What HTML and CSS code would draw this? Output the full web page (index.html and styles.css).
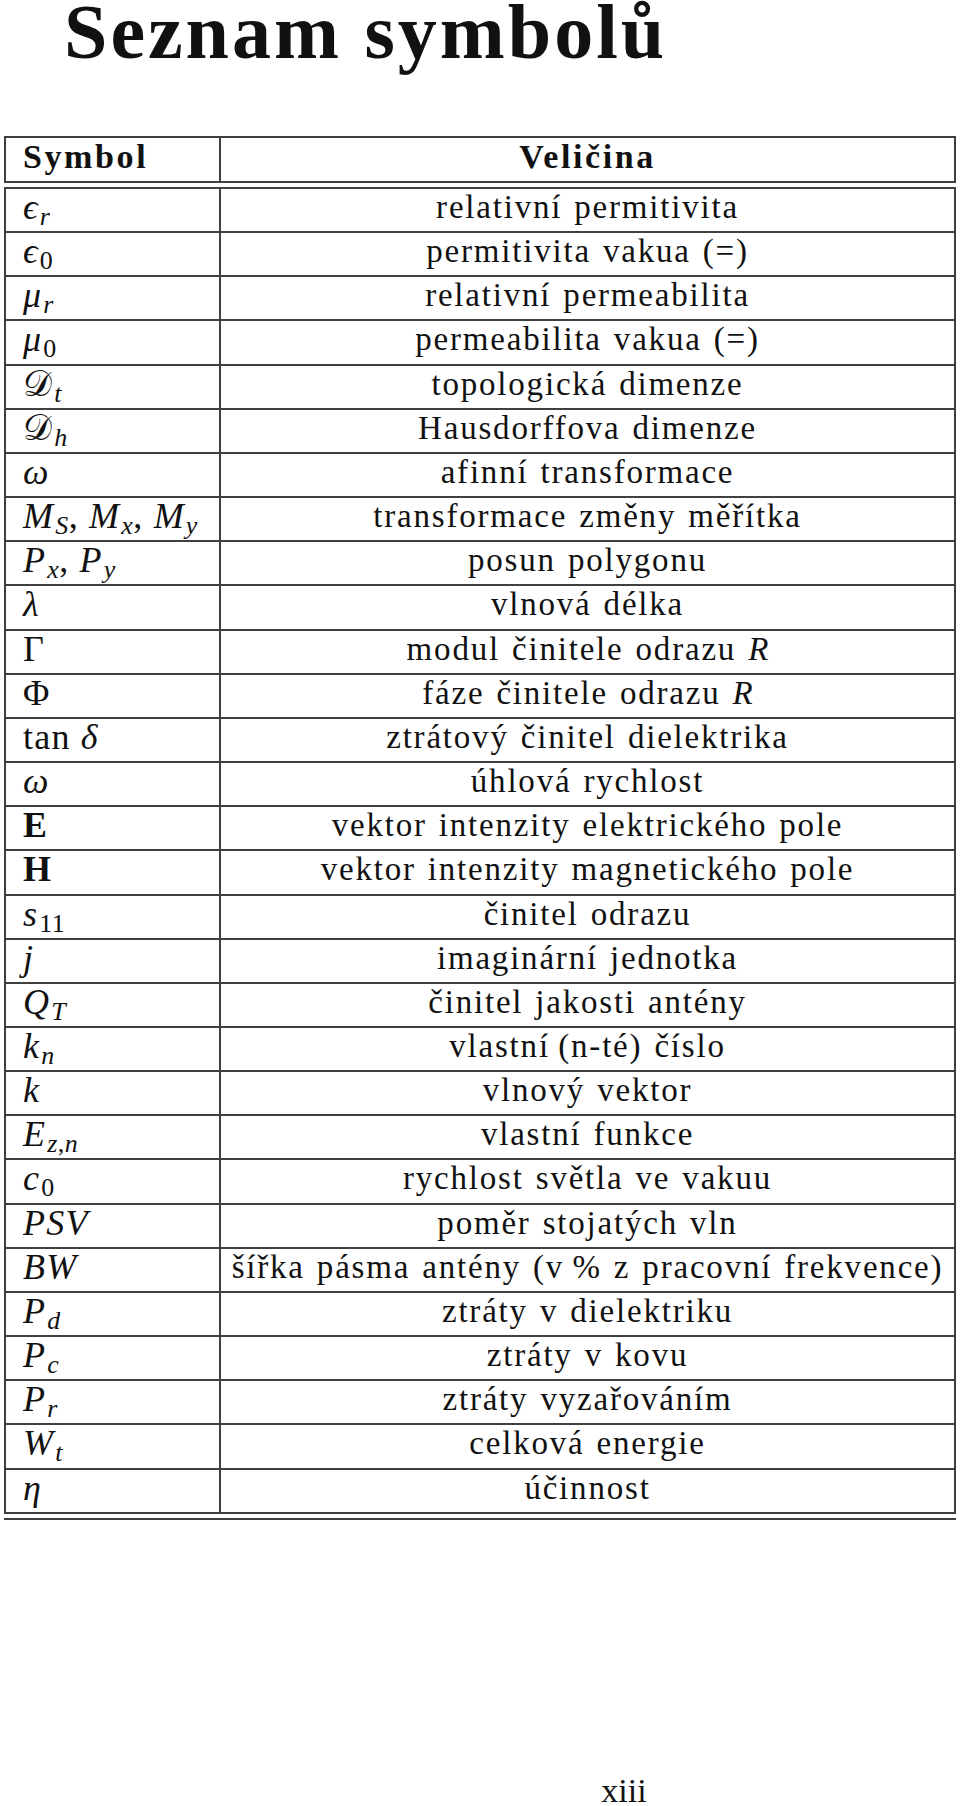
FILE: index.html
```html
<!DOCTYPE html>
<html lang="cs">
<head>
<meta charset="utf-8">
<title>Seznam symbolů</title>
<link rel="stylesheet" href="styles.css">
</head>
<body>
<main class="page">
  <h1 class="title">Seznam symbolů</h1>
  <section class="symtable">
    <div class="thead">
      <div class="row">
        <div class="c1 h">Symbol</div>
        <div class="c2 h">Veličina</div>
      </div>
    </div>
    <div class="tbody">
      <div class="row"><div class="c1 m">ϵ<sub>r</sub></div><div class="c2">relativní permitivita</div></div>
      <div class="row"><div class="c1 m">ϵ<sub class="n">0</sub></div><div class="c2">permitivita vakua (=)</div></div>
      <div class="row"><div class="c1 m">μ<sub>r</sub></div><div class="c2">relativní permeabilita</div></div>
      <div class="row"><div class="c1 m">μ<sub class="n">0</sub></div><div class="c2">permeabilita vakua (=)</div></div>
      <div class="row"><div class="c1 m"><span class="scr">𝒟</span><sub>t</sub></div><div class="c2">topologická dimenze</div></div>
      <div class="row"><div class="c1 m"><span class="scr">𝒟</span><sub>h</sub></div><div class="c2">Hausdorffova dimenze</div></div>
      <div class="row"><div class="c1 m">ω</div><div class="c2">afinní transformace</div></div>
      <div class="row"><div class="c1 m">M<sub>S</sub><span class="up">,</span> M<sub>x</sub><span class="up">,</span> M<sub>y</sub></div><div class="c2">transformace změny měřítka</div></div>
      <div class="row"><div class="c1 m">P<sub>x</sub><span class="up">,</span> P<sub>y</sub></div><div class="c2">posun polygonu</div></div>
      <div class="row"><div class="c1 m">λ</div><div class="c2">vlnová délka</div></div>
      <div class="row"><div class="c1 m"><span class="up">Γ</span></div><div class="c2">modul činitele odrazu <i class="mi">R</i></div></div>
      <div class="row"><div class="c1 m"><span class="up">Φ</span></div><div class="c2">fáze činitele odrazu <i class="mi">R</i></div></div>
      <div class="row"><div class="c1 m"><span class="up">tan</span> δ</div><div class="c2">ztrátový činitel dielektrika</div></div>
      <div class="row"><div class="c1 m">ω</div><div class="c2">úhlová rychlost</div></div>
      <div class="row"><div class="c1 m"><b class="bf">E</b></div><div class="c2">vektor intenzity elektrického pole</div></div>
      <div class="row"><div class="c1 m"><b class="bf">H</b></div><div class="c2">vektor intenzity magnetického pole</div></div>
      <div class="row"><div class="c1 m">s<sub class="n">11</sub></div><div class="c2">činitel odrazu</div></div>
      <div class="row"><div class="c1 m">j</div><div class="c2">imaginární jednotka</div></div>
      <div class="row"><div class="c1 m">Q<sub>T</sub></div><div class="c2">činitel jakosti antény</div></div>
      <div class="row"><div class="c1 m">k<sub>n</sub></div><div class="c2">vlastní&#8201;(n-té) číslo</div></div>
      <div class="row"><div class="c1 m">k</div><div class="c2">vlnový vektor</div></div>
      <div class="row"><div class="c1 m">E<sub>z<span class="up">,</span>n</sub></div><div class="c2">vlastní funkce</div></div>
      <div class="row"><div class="c1 m">c<sub class="n">0</sub></div><div class="c2">rychlost světla ve vakuu</div></div>
      <div class="row"><div class="c1 m">PSV</div><div class="c2">poměr stojatých vln</div></div>
      <div class="row"><div class="c1 m">BW</div><div class="c2">šířka pásma antény (v&#8201;% z pracovní frekvence)</div></div>
      <div class="row"><div class="c1 m">P<sub>d</sub></div><div class="c2">ztráty v dielektriku</div></div>
      <div class="row"><div class="c1 m">P<sub>c</sub></div><div class="c2">ztráty v kovu</div></div>
      <div class="row"><div class="c1 m">P<sub>r</sub></div><div class="c2">ztráty vyzařováním</div></div>
      <div class="row"><div class="c1 m">W<sub>t</sub></div><div class="c2">celková energie</div></div>
      <div class="row"><div class="c1 m">η</div><div class="c2">účinnost</div></div>
    </div>
    <div class="endrule"></div>
  </section>
  <footer class="folio">xiii</footer>
</main>
</body>
</html>
```

FILE: styles.css
```css
html, body {
  margin: 0;
  padding: 0;
  background: #ffffff;
}

body {
  font-family: "Liberation Serif", "DejaVu Serif", serif;
  color: #111111;
  width: 960px;
}

.page {
  display: block;
}

.title {
  margin: 0;
  padding-left: 64px;
  height: 64px;
  font-size: 78px;
  line-height: 64px;
  font-weight: bold;
  letter-spacing: 3px;
}

.symtable {
  margin: 72px 0 0 4px;
  width: 952px;
}

.thead {
  border: 2px solid #404040;
}

.thead .row {
  height: 43px;
}

.tbody {
  margin-top: 4px;
  border: 2px solid #404040;
  border-bottom: none;
}

.tbody .row {
  height: 44.17px;
  box-sizing: border-box;
  border-bottom: 2px solid #404040;
}

.row {
  display: grid;
  grid-template-columns: 215px 1fr;
}

.c1 {
  box-sizing: border-box;
  border-right: 2px solid #404040;
  padding-left: 17px;
  font-size: 33px;
  line-height: 36px;
  white-space: nowrap;
}

.c2 {
  text-align: center;
  font-size: 33px;
  line-height: 36px;
  letter-spacing: 1.8px;
  word-spacing: 2px;
  white-space: nowrap;
}

.h {
  font-weight: bold;
  font-size: 34px;
  padding-top: 1px;
  letter-spacing: 2.6px;
}

.m {
  font-style: italic;
  font-size: 36px;
  letter-spacing: 1.2px;
}

.m sub {
  font-size: 0.72em;
  vertical-align: -6px;
  line-height: 0;
  letter-spacing: 0.5px;
  margin-left: 1px;
}

.m sub.n,
.up {
  font-style: normal;
}

.bf {
  font-style: normal;
  font-weight: bold;
}

.mi {
  font-style: italic;
  letter-spacing: 0;
}

.scr {
  font-style: normal;
  font-family: "DejaVu Serif", "DejaVu Sans", serif;
}

.endrule {
  margin-top: 4px;
  border-top: 2px solid #404040;
}

.folio {
  margin-top: 256px;
  padding-left: 288px;
  text-align: center;
  font-size: 34px;
  line-height: 30px;
}
```
